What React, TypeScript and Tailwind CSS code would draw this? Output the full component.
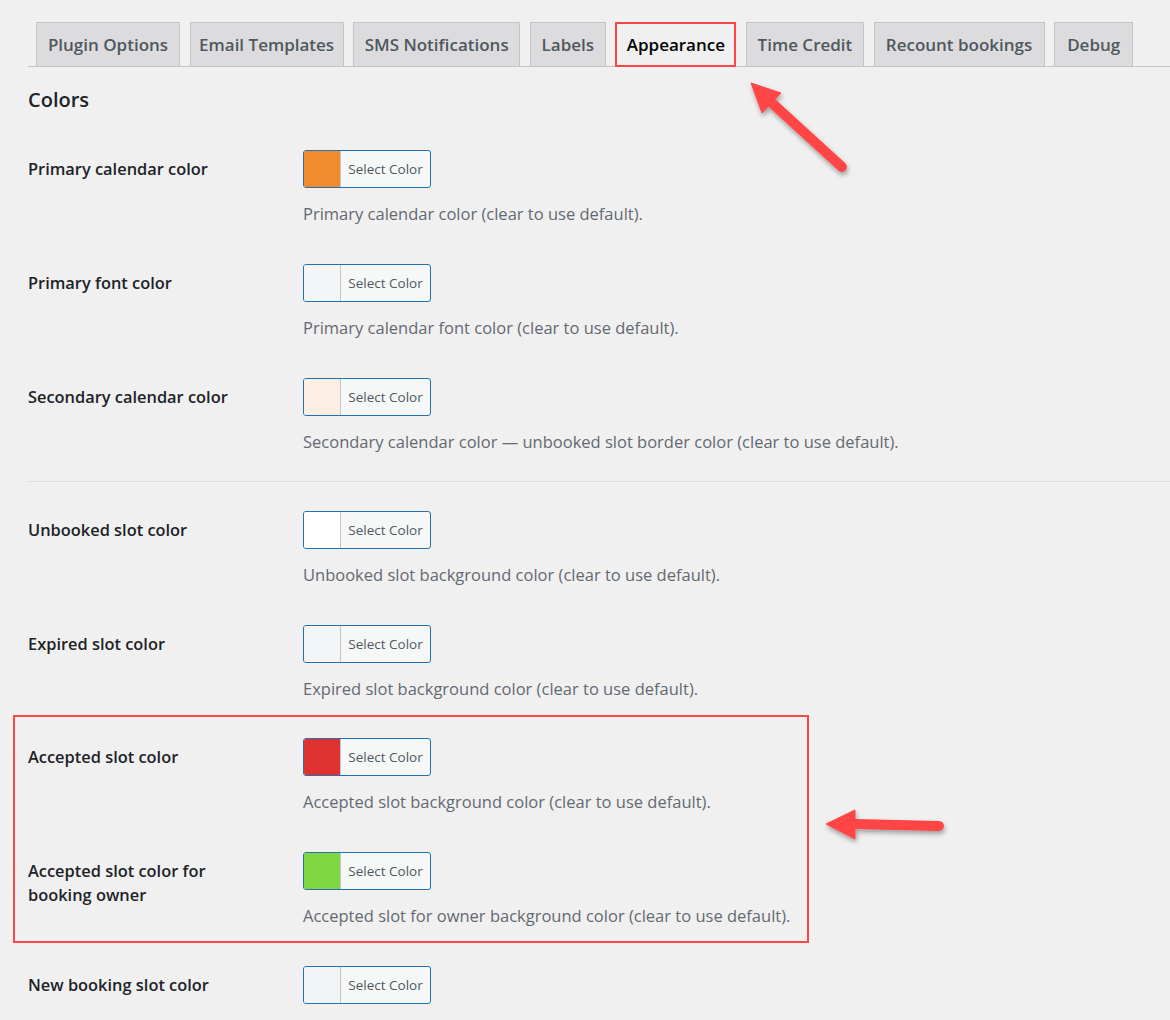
import React from 'react';

const tabs = [
  { label: 'Plugin Options', w: 'w-[144px]' },
  { label: 'Email Templates', w: 'w-[154px]' },
  { label: 'SMS Notifications', w: 'w-[167px]' },
  { label: 'Labels', w: 'w-[76px]' },
  { label: 'Appearance', w: 'w-[121px]', active: true },
  { label: 'Time Credit', w: 'w-[118px]' },
  { label: 'Recount bookings', w: 'w-[171px]' },
  { label: 'Debug', w: 'w-[79px]' },
];

interface RowProps {
  label: React.ReactNode;
  swatch: string;
  desc?: string;
}

function ColorPicker({ swatch }: { swatch: string }) {
  return (
    <div className="flex h-[38px] w-[128px] overflow-hidden rounded-[3px] border border-[#2271b1] bg-[#f6f7f7]">
      <span className="w-[37px] shrink-0 border-r border-[#c3c4c7]" style={{ background: swatch }} />
      <span className="flex flex-1 items-center justify-center text-[13.5px] text-[#50575e]">Select Color</span>
    </div>
  );
}

function Row({ label, swatch, desc }: RowProps) {
  return (
    <div className="flex">
      <div className="w-[275px] shrink-0 pt-[7px] text-[16.4px] font-semibold leading-[24px] text-[#1d2327]">{label}</div>
      <div>
        <ColorPicker swatch={swatch} />
        {desc && <p className="mt-[14px] text-[16.5px] leading-[24px] text-[#646970]">{desc}</p>}
      </div>
    </div>
  );
}

export default function App() {
  return (
    <div
      className="relative min-h-[1020px] overflow-hidden bg-[#f0f0f1] pl-[28px]"
      style={{ fontFamily: '"Open Sans", "Noto Sans", sans-serif' }}
    >
      <div className="flex items-end gap-[9.6px] border-b border-[#c3c4c7] pl-[8px] pt-[22px]">
        {tabs.map((t) =>
          t.active ? (
            <div
              key={t.label}
              className={`${t.w} -mb-px flex h-[45px] items-center justify-center border-2 border-[#ff4545] bg-[#f0f0f1] text-[17px] font-semibold text-black`}
            >
              {t.label}
            </div>
          ) : (
            <div
              key={t.label}
              className={`${t.w} flex h-[44px] items-center justify-center border border-b-0 border-[#c3c4c7] bg-[#dcdcde] text-[17px] font-semibold text-[#50575e]`}
            >
              {t.label}
            </div>
          ),
        )}
      </div>

      <h2 className="mt-[19px] text-[20px] font-semibold leading-[28px] text-[#1d2327]">Colors</h2>

      <div className="mt-[36px] flex flex-col gap-[38px]">
        <Row label="Primary calendar color" swatch="#f28a2e" desc="Primary calendar color (clear to use default)." />
        <Row label="Primary font color" swatch="#f3f5f6" desc="Primary calendar font color (clear to use default)." />
        <Row
          label="Secondary calendar color"
          swatch="#fdeee3"
          desc="Secondary calendar color — unbooked slot border color (clear to use default)."
        />
      </div>

      <hr className="mt-[27px] border-t border-[#dcdcde]" />

      <div className="mt-[29px] flex flex-col gap-[38px]">
        <Row label="Unbooked slot color" swatch="#ffffff" desc="Unbooked slot background color (clear to use default)." />
        <Row label="Expired slot color" swatch="#f3f5f6" desc="Expired slot background color (clear to use default)." />
      </div>

      <div className="-ml-[15px] mt-[14px] flex w-[796px] flex-col gap-[38px] border-2 border-[#ff4545] pb-[13px] pl-[13px] pt-[21px]">
        <Row label="Accepted slot color" swatch="#e03131" desc="Accepted slot background color (clear to use default)." />
        <Row
          label={
            <>
              Accepted slot color for
              <br />
              booking owner
            </>
          }
          swatch="#7ed640"
          desc="Accepted slot for owner background color (clear to use default)."
        />
      </div>

      <div className="mt-[23px]">
        <Row label="New booking slot color" swatch="#f1f3f5" />
      </div>

      <svg className="pointer-events-none absolute inset-0 h-[1020px] w-[1170px]" viewBox="0 0 1170 1020">
        <defs>
          <filter id="sh" x="-20%" y="-20%" width="140%" height="140%">
            <feDropShadow dx="1" dy="3" stdDeviation="2.5" floodColor="#000" floodOpacity="0.35" />
          </filter>
        </defs>
        <g filter="url(#sh)" fill="#ff4545" stroke="#ff4545">
          <line x1="842" y1="167" x2="773" y2="104" strokeWidth="10" strokeLinecap="round" />
          <polygon points="751,83 781,93 762,113" strokeWidth="1" strokeLinejoin="round" />
          <line x1="939" y1="826" x2="855" y2="824" strokeWidth="10" strokeLinecap="round" />
          <polygon points="826,824 855,810 855,839" strokeWidth="1" strokeLinejoin="round" />
        </g>
      </svg>
    </div>
  );
}
